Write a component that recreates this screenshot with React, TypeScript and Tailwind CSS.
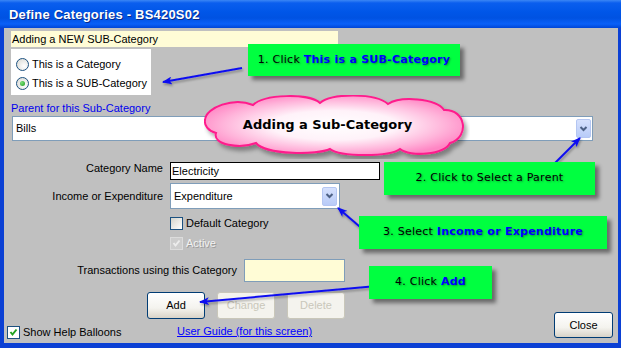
import type { ReactNode } from "react";

function Chevron() {
  return (
    <svg width="9" height="6" viewBox="0 0 9 6">
      <path d="M1.5 1 L4.5 4 L7.5 1" fill="none" stroke="#4d6185" strokeWidth="2" />
    </svg>
  );
}

function DropButton() {
  return (
    <div className="ml-auto w-[15px] h-[19px] rounded-[2px] border border-[#b4c6f2] bg-[linear-gradient(180deg,#d6e1fd,#b8cbf8)] flex items-center justify-center">
      <Chevron />
    </div>
  );
}

function Check({ color }: { color: string }) {
  return (
    <svg width="11" height="11" viewBox="0 0 11 11">
      <polyline points="2.5,5 4.5,7.5 8.5,2.5" fill="none" stroke={color} strokeWidth="2" />
    </svg>
  );
}

function XpButton({ label, disabled }: { label: string; disabled?: boolean }) {
  return (
    <button
      className={
        disabled
          ? "w-[58px] h-[27px] rounded-[3px] border border-[#c9c7ba] bg-[#f4f3ee] text-[#c9c7ba]"
          : "w-[58px] h-[27px] rounded-[3px] border border-[#003c74] bg-[linear-gradient(180deg,#ffffff_0%,#f4f3ee_60%,#d8d3c8_100%)] text-black"
      }
    >
      {label}
    </button>
  );
}

function Callout({ className, children }: { className: string; children: ReactNode }) {
  return (
    <div
      className={`absolute flex items-center justify-center bg-[#00ff40] shadow-[4px_4px_4px_rgba(0,0,0,0.45)] font-['DejaVu_Sans',sans-serif] text-[11px] tracking-[0.25px] text-black [text-shadow:1px_1px_2px_#00a830] ${className}`}
    >
      {children}
    </div>
  );
}

export default function App() {
  return (
    <div className="relative w-[621px] h-[348px] overflow-hidden bg-[#0b40d4] flex flex-col font-['Liberation_Sans',Arial,sans-serif] text-[11px] text-black">
      {/* Title bar */}
      <div className="h-[28px] shrink-0 flex items-center pl-[9px] pt-[2px] bg-[linear-gradient(180deg,#3b86f5_0px,#0a5eee_3px,#0056e8_12px,#0052e2_18px,#0a60f8_24px,#0045d6_28px)]">
        <span className="text-white font-bold text-[13px] tracking-[0.2px] [text-shadow:1px_1px_0_#0a2a8a]">
          Define Categories - BS420S02
        </span>
      </div>

      {/* Body */}
      <div className="flex-1 ml-[4px] mr-[3px] mb-[5px] bg-[#c0c0c0] flex flex-col">
        <div className="ml-[7px] mt-[3px] w-[327px] h-[16px] bg-[#fffcd6] pl-[1px] leading-[16px]">
          Adding a NEW SUB-Category
        </div>

        <div className="ml-[7px] mt-[2px] w-[140px] h-[46px] bg-white pl-[5px] pt-[9px] flex flex-col gap-[6px]">
          <div className="flex items-center gap-[3px] h-[13px]">
            <div className="w-[13px] h-[13px] rounded-full border border-[#1c5180] bg-[radial-gradient(circle_at_65%_65%,#ffffff,#d6d6d0)]" />
            <span>This is a Category</span>
          </div>
          <div className="flex items-center gap-[3px] h-[13px]">
            <div className="w-[13px] h-[13px] rounded-full border border-[#1c5180] bg-[radial-gradient(circle_at_65%_65%,#ffffff,#d6d6d0)] flex items-center justify-center">
              <div className="w-[5px] h-[5px] rounded-full bg-[radial-gradient(circle_at_35%_35%,#7be07b,#1d9a1d)]" />
            </div>
            <span>This is a SUB-Category</span>
          </div>
        </div>

        <div className="ml-[7px] mt-[6px] leading-[14px] text-[#0000ee]">Parent for this Sub-Category</div>
        <div className="ml-[8px] mt-[1px] w-[581px] h-[25px] border border-[#7f9db9] bg-white flex items-center pl-[3px] pr-[1px]">
          <span>Bills</span>
          <DropButton />
        </div>

        <div className="mt-[21px] flex items-start h-[18px]">
          <div className="w-[159px] text-right leading-[12px]">Category Name</div>
          <div className="ml-[7px] w-[210px] h-[18px] border border-black bg-white pl-[1px] leading-[16px]">Electricity</div>
        </div>

        <div className="mt-[3px] flex items-center h-[26px]">
          <div className="w-[159px] text-right">Income or Expenditure</div>
          <div className="ml-[7px] w-[170px] h-[26px] border border-[#7f9db9] bg-white flex items-center pl-[3px] pr-[2px]">
            <span>Expenditure</span>
            <DropButton />
          </div>
        </div>

        <div className="mt-[8px] ml-[166px] flex items-center gap-[3px] h-[13px]">
          <div className="w-[13px] h-[13px] border border-[#1c5180] bg-[linear-gradient(135deg,#d4d4cc,#ffffff)]" />
          <span>Default Category</span>
        </div>

        <div className="mt-[7px] ml-[166px] flex items-center gap-[3px] h-[13px]">
          <div className="w-[13px] h-[13px] border border-[#dcdcdc] bg-[#cdcdcd] flex items-center justify-center">
            <Check color="#ececec" />
          </div>
          <span className="text-[#f2f2f2] [text-shadow:1px_1px_0_#9a9a9a]">Active</span>
        </div>

        <div className="mt-[9px] flex items-center h-[23px]">
          <div className="w-[233px] text-right">Transactions using this Category</div>
          <div className="ml-[7px] w-[101px] h-[23px] border border-[#7f9db9] bg-[#fffcd6]" />
        </div>

        <div className="mt-[10px] flex items-start">
          <div className="flex flex-col">
            <div className="ml-[143px] flex gap-[12px]">
              <XpButton label="Add" />
              <XpButton label="Change" disabled />
              <XpButton label="Delete" disabled />
            </div>
            <div className="mt-[7px] ml-[3px] flex items-center h-[13px]">
              <div className="w-[170px] flex items-center gap-[3px]">
                <div className="w-[13px] h-[13px] border border-[#1c5180] bg-white flex items-center justify-center">
                  <Check color="#21a121" />
                </div>
                <span>Show Help Balloons</span>
              </div>
              <a className="text-[#0000ff] underline -mt-[2px]">User Guide (for this screen)</a>
            </div>
          </div>
          <div className="ml-auto mr-[5px] mt-[20px]">
            <button className="w-[59px] h-[26px] rounded-[3px] border border-[#003c74] bg-[linear-gradient(180deg,#ffffff_0%,#f4f3ee_60%,#d8d3c8_100%)]">
              Close
            </button>
          </div>
        </div>
      </div>

      {/* Cloud */}
      <div className="absolute left-[204px] top-[95px] w-[266px] h-[64px]">
        <svg className="absolute inset-0" width="266" height="64" viewBox="0 0 266 64">
          <defs>
            <radialGradient id="cloudFill" cx="50%" cy="50%" r="55%">
              <stop offset="0%" stopColor="#ffffff" />
              <stop offset="45%" stopColor="#fff2f9" />
              <stop offset="78%" stopColor="#ffb4da" />
              <stop offset="100%" stopColor="#ff86c4" />
            </radialGradient>
            <filter id="cloudShadow" x="-10%" y="-20%" width="130%" height="150%">
              <feDropShadow dx="3" dy="4" stdDeviation="2" floodColor="#000" floodOpacity="0.35" />
            </filter>
          </defs>
          <path
            d="M1 25 C2 12 30 2 49 10 C60 -1 105 -2 116 8 C128 -2 172 -2 184 9 C196 1 232 3 240 15 C262 14 266 42 246 48 C240 60 206 62 196 54 C186 62 136 62 126 54 C114 60 62 60 52 48 C36 54 8 50 12 38 C4 36 0 30 1 25 Z"
            fill="url(#cloudFill)"
            stroke="#ff1a8c"
            strokeWidth="2"
            filter="url(#cloudShadow)"
          />
        </svg>
        <div className="relative h-full flex items-center justify-center pr-[19px] pb-[4px] font-['DejaVu_Sans',sans-serif] font-bold text-[13px]">
          Adding a Sub-Category
        </div>
      </div>

      {/* Arrows */}
      <svg className="absolute inset-0 pointer-events-none" width="621" height="348" viewBox="0 0 621 348">
        <defs>
          <marker id="head" viewBox="0 0 10 8" refX="9" refY="4" markerWidth="10" markerHeight="8" markerUnits="userSpaceOnUse" orient="auto">
            <path d="M0 0 L10 4 L0 8 L2.5 4 Z" fill="#1010f0" />
          </marker>
          <filter id="arrowShadow" x="-20%" y="-50%" width="140%" height="200%">
            <feDropShadow dx="1" dy="2" stdDeviation="1" floodColor="#000" floodOpacity="0.3" />
          </filter>
        </defs>
        <g stroke="#1010f0" strokeWidth="2" filter="url(#arrowShadow)">
          <line x1="242" y1="68" x2="163" y2="82" markerEnd="url(#head)" />
          <line x1="552" y1="166" x2="580" y2="138" markerEnd="url(#head)" />
          <line x1="366" y1="232" x2="338" y2="208" markerEnd="url(#head)" />
          <line x1="377" y1="286" x2="200" y2="302" markerEnd="url(#head)" />
        </g>
      </svg>

      {/* Callouts */}
      <Callout className="left-[248px] top-[44px] w-[212px] h-[32px]">
        <span>1. Click&nbsp;</span>
        <span className="font-bold text-[#0000ff]">This is a SUB-Category</span>
      </Callout>
      <Callout className="left-[384px] top-[162px] w-[211px] h-[33px]">
        <span>2. Click to Select a Parent</span>
      </Callout>
      <Callout className="left-[359px] top-[216px] w-[248px] h-[33px]">
        <span>3. Select&nbsp;</span>
        <span className="font-bold text-[#0000ff]">Income or Expenditure</span>
      </Callout>
      <Callout className="left-[369px] top-[266px] w-[123px] h-[33px]">
        <span>4. Click&nbsp;</span>
        <span className="font-bold text-[#0000ff]">Add</span>
      </Callout>
    </div>
  );
}
